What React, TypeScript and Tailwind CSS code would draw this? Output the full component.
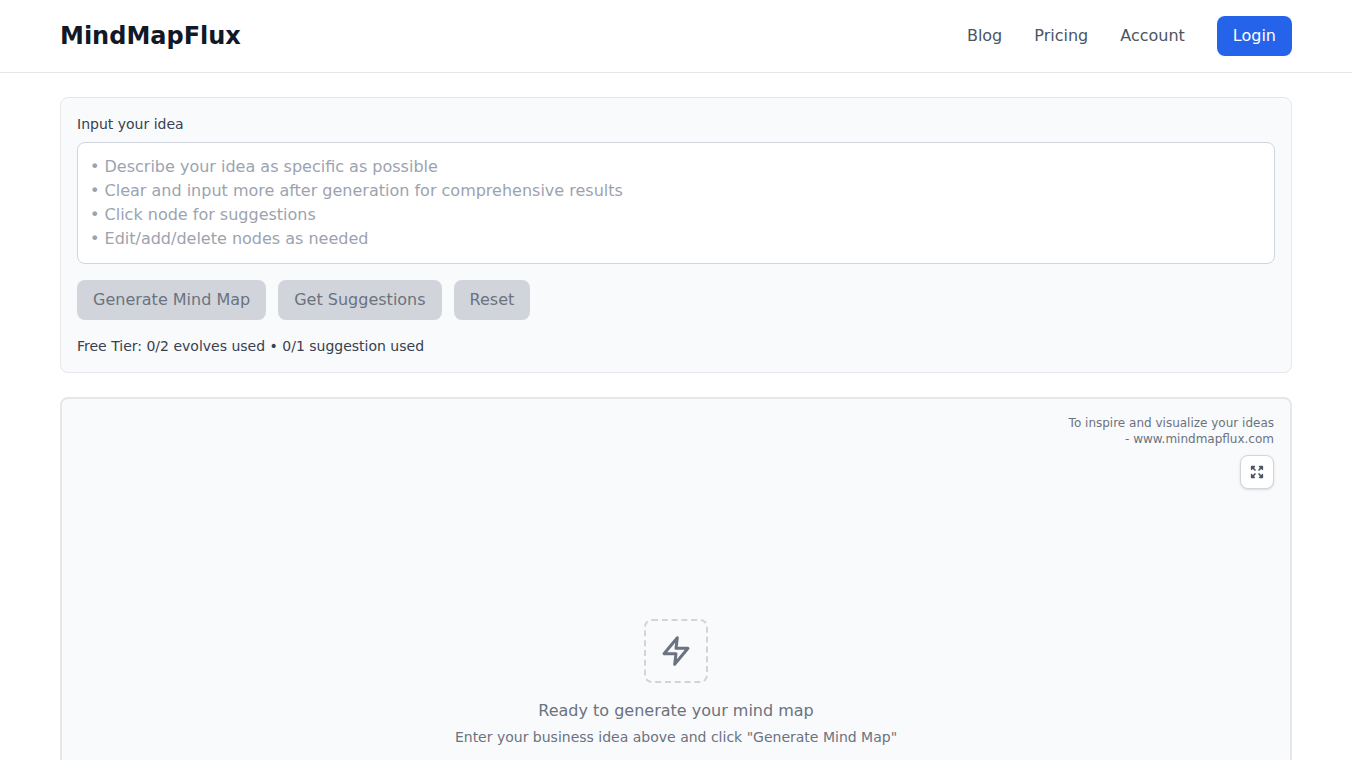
function Header() {
  return (
    <header className="flex h-[73px] items-center justify-between border-b border-[#e5e7eb] bg-white px-[60px]">
      <div className="text-2xl font-bold text-[#111827]">MindMapFlux</div>
      <nav className="flex items-center gap-8 text-[#4b5563]">
        <a>Blog</a>
        <a>Pricing</a>
        <a>Account</a>
        <button className="rounded-lg bg-[#2563eb] px-4 py-2 text-white">Login</button>
      </nav>
    </header>
  );
}

function ExpandIcon() {
  return (
    <svg className="h-4 w-4 text-[#4b5563]" viewBox="0 0 24 24" fill="none" stroke="currentColor" strokeWidth={2.5} strokeLinecap="round" strokeLinejoin="round">
      <path d="M8 4H4v4M4 4l5 5M16 4h4v4M20 4l-5 5M8 20H4v-4M4 20l5-5M16 20h4v-4M20 20l-5-5" />
    </svg>
  );
}

function ZapIcon() {
  return (
    <svg className="h-8 w-8 text-[#6b7280]" viewBox="0 0 24 24" fill="none" stroke="currentColor" strokeWidth={2.25} strokeLinecap="round" strokeLinejoin="round">
      <polygon points="13 2 3 14 12 14 11 22 21 10 12 10 13 2" />
    </svg>
  );
}

const disabledButton = "rounded-lg bg-[#d1d5db] px-4 py-2 text-[#6b7280]";

export default function App() {
  return (
    <div className="h-[760px] overflow-hidden bg-white font-['DejaVu_Sans',sans-serif] antialiased">
      <Header />
      <main className="flex flex-col gap-6 px-[60px] pt-6">
        <section className="rounded-lg border border-[#e5e7eb] bg-[#f9fafb] p-4">
          <label className="mb-2 block text-sm text-[#374151]">Input your idea</label>
          <div className="rounded-lg border border-[#d1d5db] bg-white p-3 text-[#9ca3af]">
            <div>• Describe your idea as specific as possible</div>
            <div>• Clear and input more after generation for comprehensive results</div>
            <div>• Click node for suggestions</div>
            <div>• Edit/add/delete nodes as needed</div>
          </div>
          <div className="mt-4 flex gap-3">
            <button className={disabledButton}>Generate Mind Map</button>
            <button className={disabledButton}>Get Suggestions</button>
            <button className={disabledButton}>Reset</button>
          </div>
          <p className="mt-4 text-sm text-[#374151]">Free Tier: 0/2 evolves used • 0/1 suggestion used</p>
        </section>
        <section className="flex h-[500px] flex-col rounded-lg border-2 border-[#e5e7eb] bg-[#f9fafb] px-4 pt-4">
          <div className="text-right text-xs leading-4 text-[#6b7280]">
            <div>To inspire and visualize your ideas</div>
            <div>- www.mindmapflux.com</div>
          </div>
          <div className="mt-2 flex justify-end">
            <button className="flex h-[34px] w-[34px] items-center justify-center rounded-lg border border-[#d1d5db] bg-white shadow-sm">
              <ExpandIcon />
            </button>
          </div>
          <div className="mt-[130px] flex flex-col items-center">
            <div className="flex h-16 w-16 items-center justify-center rounded-lg border-2 border-dashed border-[#d1d5db]">
              <ZapIcon />
            </div>
            <p className="mt-4 text-[#6b7280]">Ready to generate your mind map</p>
            <p className="mt-1 text-sm text-[#6b7280]">Enter your business idea above and click "Generate Mind Map"</p>
          </div>
        </section>
      </main>
    </div>
  );
}
